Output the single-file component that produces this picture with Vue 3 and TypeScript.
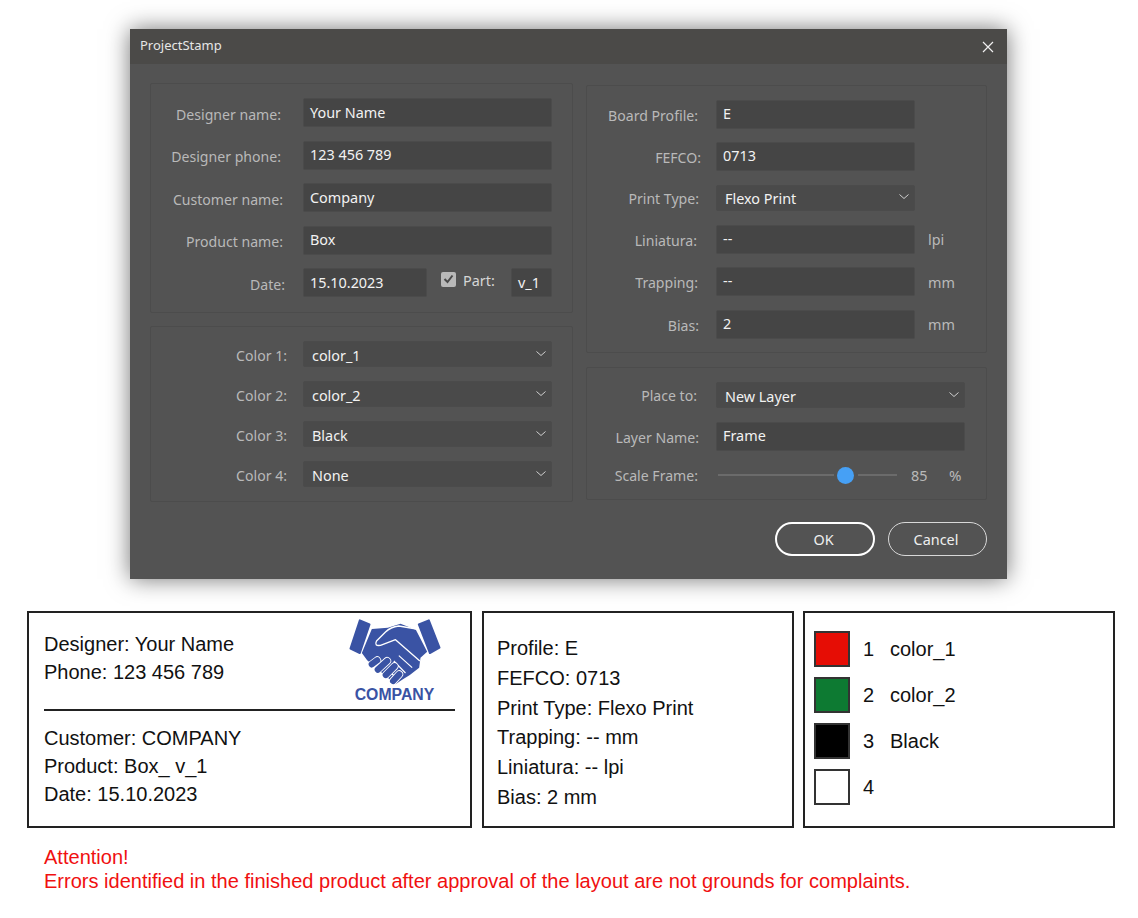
<script setup lang="ts">
interface Row {
  label: string;
  value: string;
  inset: number;
  select?: boolean;
  unit?: string;
}

const designerRows: Row[] = [
  { label: "Designer name:", value: "Your Name", inset: 22 },
  { label: "Designer phone:", value: "123 456 789", inset: 22 },
  { label: "Customer name:", value: "Company", inset: 20 },
  { label: "Product name:", value: "Box", inset: 20 },
];

const colorRows: Row[] = [
  { label: "Color 1:", value: "color_1", inset: 16, select: true },
  { label: "Color 2:", value: "color_2", inset: 16, select: true },
  { label: "Color 3:", value: "Black", inset: 16, select: true },
  { label: "Color 4:", value: "None", inset: 16, select: true },
];

const boardRows: Row[] = [
  { label: "Board Profile:", value: "E", inset: 18 },
  { label: "FEFCO:", value: "0713", inset: 15 },
  { label: "Print Type:", value: "Flexo Print", inset: 17, select: true },
  { label: "Liniatura:", value: "--", inset: 19, unit: "lpi" },
  { label: "Trapping:", value: "--", inset: 18, unit: "mm" },
  { label: "Bias:", value: "2", inset: 17, unit: "mm" },
];

const stampProfile = [
  "Profile: E",
  "FEFCO: 0713",
  "Print Type: Flexo Print",
  "Trapping: -- mm",
  "Liniatura: -- lpi",
  "Bias: 2 mm",
];

const swatches = [
  { num: 1, name: "color_1", color: "#e60d05" },
  { num: 2, name: "color_2", color: "#0d7a32" },
  { num: 3, name: "Black", color: "#000000" },
  { num: 4, name: "", color: "#ffffff" },
];
</script>

<template>
  <div class="page">
    <section class="dialog">
      <header class="dialog__title">
        <span>ProjectStamp</span>
        <svg class="dialog__close" width="12" height="12" viewBox="0 0 12 12">
          <path d="M1 1l10 10M11 1L1 11" stroke="#f0f0f0" stroke-width="1.2" fill="none" />
        </svg>
      </header>

      <div class="dialog__body">
        <div class="col col--left">
          <div class="panel panel--designer">
            <div v-for="row in designerRows" :key="row.label" class="row">
              <label class="row__label" :style="{ paddingRight: row.inset + 'px' }">{{ row.label }}</label>
              <div class="field">{{ row.value }}</div>
            </div>
            <div class="row">
              <label class="row__label" :style="{ paddingRight: '18px' }">Date:</label>
              <div class="field field--date">15.10.2023</div>
              <span class="check">
                <svg width="11" height="10" viewBox="0 0 11 10">
                  <path d="M1.5 5l3 3 5-6.5" stroke="#4a4a4a" stroke-width="2" fill="none" />
                </svg>
              </span>
              <span class="part-label">Part:</span>
              <div class="field field--part">v_1</div>
            </div>
          </div>

          <div class="panel panel--colors">
            <div v-for="row in colorRows" :key="row.label" class="row">
              <label class="row__label" :style="{ paddingRight: row.inset + 'px' }">{{ row.label }}</label>
              <div class="select">
                <span>{{ row.value }}</span>
                <svg width="10" height="6" viewBox="0 0 10 6">
                  <path d="M0.5 0.5L5 4.5 9.5 0.5" stroke="#d0d0d0" fill="none" />
                </svg>
              </div>
            </div>
          </div>
        </div>

        <div class="col col--right">
          <div class="panel panel--board">
            <div v-for="row in boardRows" :key="row.label" class="row row--right">
              <label class="row__label" :style="{ paddingRight: row.inset + 'px' }">{{ row.label }}</label>
              <div v-if="row.select" class="select select--short">
                <span>{{ row.value }}</span>
                <svg width="10" height="6" viewBox="0 0 10 6">
                  <path d="M0.5 0.5L5 4.5 9.5 0.5" stroke="#d0d0d0" fill="none" />
                </svg>
              </div>
              <div v-else class="field field--short">{{ row.value }}</div>
              <span v-if="row.unit" class="unit">{{ row.unit }}</span>
            </div>
          </div>

          <div class="panel panel--place">
            <div class="row row--right">
              <label class="row__label" :style="{ paddingRight: '19px' }">Place to:</label>
              <div class="select">
                <span>New Layer</span>
                <svg width="10" height="6" viewBox="0 0 10 6">
                  <path d="M0.5 0.5L5 4.5 9.5 0.5" stroke="#d0d0d0" fill="none" />
                </svg>
              </div>
            </div>
            <div class="row row--right">
              <label class="row__label" :style="{ paddingRight: '17px' }">Layer Name:</label>
              <div class="field">Frame</div>
            </div>
            <div class="row row--right">
              <label class="row__label" :style="{ paddingRight: '18px' }">Scale Frame:</label>
              <div class="slider">
                <i class="slider__track slider__track--a"></i>
                <i class="slider__thumb"></i>
                <i class="slider__track slider__track--b"></i>
              </div>
              <span class="slider__value">85</span>
              <span class="slider__unit">%</span>
            </div>
          </div>

          <div class="actions">
            <button class="btn btn--primary">OK</button>
            <button class="btn">Cancel</button>
          </div>
        </div>
      </div>
    </section>

    <section class="stamps">
      <div class="stamp stamp--main">
        <div class="stamp__head">
          <div>
            <p>Designer: Your Name</p>
            <p>Phone: 123 456 789</p>
          </div>
          <div class="logo">
            <svg width="97" height="70" viewBox="50 20 290 210">
              <path d="M88 30L117 42 88 128 60 115Z" fill="#3a53a4" stroke="#3a53a4" stroke-width="6" stroke-linejoin="round" />
              <path d="M265 42L295 30 327 112 298 128Z" fill="#3a53a4" stroke="#3a53a4" stroke-width="6" stroke-linejoin="round" />
              <path d="M124 56L172 52 210 40 256 58 290 124 270 142 266 172 238 194 215 208 195 222 110 150 94 128Z" fill="#3a53a4" />
              <path d="M258 56L205 47Q180 50 165 65L138 92Q130 108 150 105L195 88 268 152" stroke="#fff" stroke-width="4" fill="none" stroke-linejoin="round" />
              <path d="M245 172L205 136M225 188L190 152M200 206L182 188" stroke="#fff" stroke-width="3.5" fill="none" />
              <g stroke-linecap="round" fill="none">
                <path d="M124 162L140 150M142 178L170 152M166 194L192 168M188 212L206 192" stroke="#fff" stroke-width="24" />
                <path d="M124 162L140 150M142 178L170 152M166 194L192 168M188 212L206 192" stroke="#3a53a4" stroke-width="19" />
              </g>
            </svg>
            <span class="logo__name">COMPANY</span>
          </div>
        </div>
        <hr class="stamp__rule" />
        <p>Customer: COMPANY</p>
        <p>Product: Box_ v_1</p>
        <p>Date: 15.10.2023</p>
      </div>

      <div class="stamp stamp--profile">
        <p v-for="line in stampProfile" :key="line">{{ line }}</p>
      </div>

      <div class="stamp stamp--colors">
        <div v-for="s in swatches" :key="s.num" class="swatch-row">
          <i class="swatch" :style="{ background: s.color }"></i>
          <span class="swatch-row__num">{{ s.num }}</span>
          <span>{{ s.name }}</span>
        </div>
      </div>
    </section>

    <p class="note">
      Attention!<br />
      Errors identified in the finished product after approval of the layout are not grounds for complaints.
    </p>
  </div>
</template>

<style>
html,
body {
  margin: 0;
  background: #fff;
}
</style>

<style scoped>
.page {
  width: 1138px;
  height: 918px;
  overflow: hidden;
  padding-top: 29px;
  box-sizing: border-box;
  font-family: "Liberation Sans", Arial, sans-serif;
}

/* dialog */
.dialog {
  width: 877px;
  height: 550px;
  margin-left: 130px;
  background: #535353;
  box-shadow: 0 0 22px rgba(0, 0, 0, 0.55);
  font-family: "Noto Sans", sans-serif;
  font-size: 14.4px;
  color: #b9b9b9;
}

.dialog__title {
  box-sizing: border-box;
  height: 35px;
  display: flex;
  align-items: center;
  justify-content: space-between;
  padding: 0 13px 3px 10px;
  background: #4b4a48;
  font-size: 13px;
  color: #e6e6e6;
}

.dialog__close {
  margin-top: 3px;
}

.dialog__body {
  display: grid;
  grid-template-columns: 423px 401px;
  column-gap: 13px;
  padding: 19px 20px 0;
}

.col {
  display: flex;
  flex-direction: column;
}

.col--left {
  gap: 13px;
}

.col--right {
  gap: 14px;
  padding-top: 2px;
}

.panel {
  box-sizing: border-box;
  display: flex;
  flex-direction: column;
  border: 1px solid #4c4c4c;
  border-radius: 2px;
}

.panel--designer {
  height: 230px;
  padding-top: 14px;
  gap: 13.5px;
}

.panel--colors {
  height: 176px;
  padding-top: 14px;
  gap: 14px;
}

.panel--board {
  height: 268px;
  padding-top: 13.8px;
  gap: 13.6px;
}

.panel--place {
  height: 133px;
  padding-top: 14px;
  gap: 14px;
}

.row {
  display: flex;
  align-items: center;
  padding-right: 20px;
}

.panel--place .row {
  padding-right: 21px;
}

.row__label {
  flex: 0 0 152px;
  box-sizing: border-box;
  text-align: right;
  padding-top: 3px;
  font-size: 14.1px;
  white-space: nowrap;
}

.row--right .row__label {
  flex-basis: 129px;
  padding-top: 2px;
}

.panel--place .row__label {
  padding-top: 1px;
}

.field,
.select {
  box-sizing: border-box;
  flex: 1;
  display: flex;
  align-items: center;
  border: 1px solid #4b4b4b;
  border-radius: 2px;
  color: #f2f2f2;
}

.field {
  height: 29px;
  padding: 0 0 2px 6px;
  background: #454545;
}

.panel--designer .field {
  padding-bottom: 1px;
}

.select {
  height: 26px;
  justify-content: space-between;
  padding: 2px 5px 0 8px;
  background: #4a4a4a;
}

.select svg {
  margin-top: -3px;
}

.field--date {
  flex: 0 0 124px;
}

.field--part {
  flex: 0 0 41px;
  padding-left: 6px;
}

.field--short,
.select--short {
  flex: 0 0 199px;
}

.check {
  flex: 0 0 15px;
  height: 15px;
  margin: -7px 7px 0 14px;
  display: flex;
  align-items: center;
  justify-content: center;
  background: #b9b9b9;
  border-radius: 2px;
}

.part-label {
  width: 48px;
  margin-top: -4px;
  color: #d6d6d6;
}

.unit {
  margin-left: 13px;
  padding-top: 1px;
}

/* slider */
.slider {
  display: flex;
  align-items: center;
  width: 181px;
  margin-left: 2px;
}

.slider__track {
  display: block;
  height: 2px;
  background: #6b6b6b;
}

.slider__track--a {
  width: 116px;
}

.slider__track--b {
  width: 39px;
}

.slider__thumb {
  display: block;
  width: 17px;
  height: 17px;
  margin: 0 4px 0 3px;
  border-radius: 50%;
  background: #46a0f5;
}

.slider__value {
  margin-left: 12px;
  width: 38px;
}

.slider__unit {
  font-size: 15px;
}

/* footer buttons */
.actions {
  display: flex;
  justify-content: flex-end;
  gap: 13px;
  margin-top: 8px;
}

.btn {
  box-sizing: border-box;
  height: 34px;
  width: 99px;
  border: 1px solid #d8d8d8;
  border-radius: 17px;
  background: transparent;
  color: #efefef;
  font: inherit;
  padding: 0 3px 0 0;
}

.btn--primary {
  width: 100px;
  border: 2px solid #fff;
}

/* printed stamp */
.stamps {
  display: flex;
  margin: 32px 0 0 27px;
  font-size: 20px;
  color: #111;
}

.stamp {
  box-sizing: border-box;
  flex: 0 0 312px;
  height: 217px;
  border: 2px solid #222;
}

.stamp p {
  margin: 0;
}

.stamp--main {
  flex-basis: 445px;
  padding: 17px 15px 0;
  line-height: 28px;
}

.stamp__head {
  height: 79px;
  display: flex;
  justify-content: space-between;
  align-items: flex-start;
}

.stamp__rule {
  height: 2px;
  margin: 0 0 13px;
  border: 0;
  background: #222;
}

.logo {
  display: flex;
  flex-direction: column;
  align-items: center;
  margin: -13px 11px 0 0;
}

.logo svg {
  display: block;
}

.logo__name {
  margin: -1px 2px 0 0;
  font-size: 15.8px;
  font-weight: 700;
  line-height: 17px;
  color: #3a53a4;
}

.stamp--profile {
  margin: 0 9px 0 10px;
  padding: 21px 0 0 13px;
  line-height: 29.8px;
}

.stamp--colors {
  padding: 18px 0 0 9px;
  display: flex;
  flex-direction: column;
  gap: 10px;
}

.swatch-row {
  display: flex;
  align-items: center;
  height: 36px;
}

.swatch {
  box-sizing: border-box;
  width: 36px;
  height: 36px;
  margin-right: 13px;
  border: 2px solid #333;
}

.swatch-row__num {
  width: 27px;
}

.note {
  margin: 17px 0 0 44px;
  font-size: 20.05px;
  line-height: 24px;
  color: #f01010;
}
</style>
